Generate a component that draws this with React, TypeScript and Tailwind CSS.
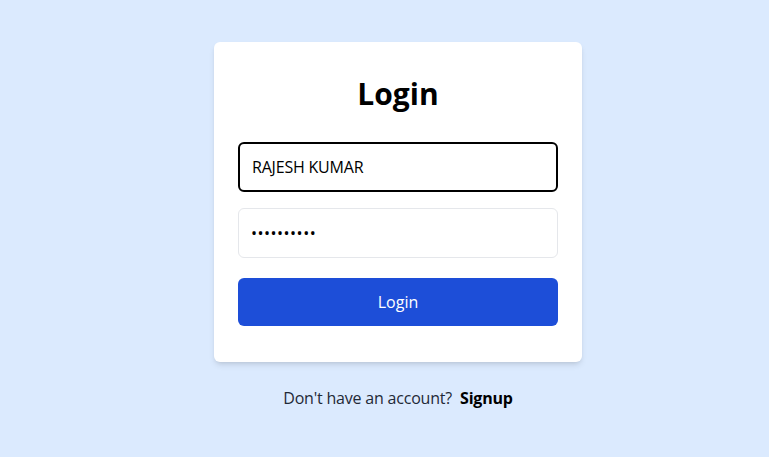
import React, { useEffect, useRef } from 'react';

const App = () => {
  const nameRef = useRef<HTMLInputElement>(null);

  useEffect(() => {
    const el = nameRef.current;
    if (el) {
      el.focus();
      el.setSelectionRange(el.value.length, el.value.length);
    }
  }, []);

  return (
    <div
      className="min-h-screen w-full bg-[#dbeafe] pt-[42px] pl-[27px] flex flex-col items-center"
      style={{ fontFamily: '"Open Sans", "Noto Sans", sans-serif' }}
    >
      <div className="w-[368px] rounded-md bg-white px-6 pt-[34px] pb-9 shadow-md">
        <h1 className="mb-[30px] text-center text-3xl leading-9 font-bold text-black">Login</h1>
        <input
          ref={nameRef}
          type="text"
          defaultValue="RAJESH KUMAR"
          className="mb-4 block h-[50px] w-full rounded-md border-2 border-black px-3 text-base tracking-[-0.2px] text-black caret-black outline-none"
        />
        <input
          type="password"
          defaultValue="secret1234"
          className="mb-5 block h-[50px] w-full rounded-md border border-[#e5e7eb] px-3 text-base tracking-[0.5px] text-black outline-none"
        />
        <button className="block h-12 w-full rounded-md bg-[#1d4ed8] text-base text-white">Login</button>
      </div>
      <p className="mt-6 text-base leading-6 tracking-[-0.2px] text-[#1f2937]">
        Don't have an account? <span className="ml-1 font-bold text-black">Signup</span>
      </p>
    </div>
  );
};

export default App;
